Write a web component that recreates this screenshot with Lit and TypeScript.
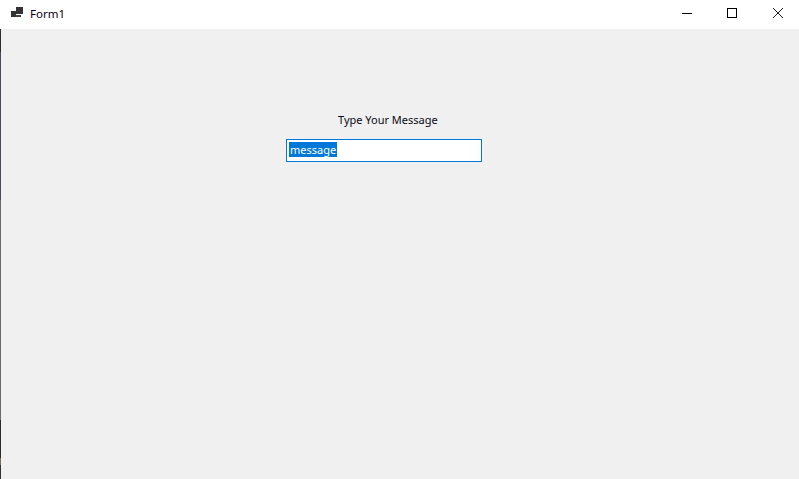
import { LitElement, html, css } from "lit";
import { customElement } from "lit/decorators.js";

@customElement("app-root")
export class AppRoot extends LitElement {
  static styles = css`
    :host {
      display: flex;
      width: 799px;
      height: 479px;
      overflow: hidden;
      font-family: "Noto Sans", "Open Sans", "Liberation Sans", sans-serif;
      font-size: 11px;
      color: #000;
      background: #fff;
    }
    .edge {
      width: 1px;
      flex: none;
      background: linear-gradient(
        to bottom,
        #ffffff 0 29px,
        #2b2b2b 29px 52px,
        #4a4a5a 52px 200px,
        #6a6a6a 200px 420px,
        #2a2a2a 420px 458px,
        #7a6a5a 458px 465px,
        #333333 465px 479px
      );
    }
    .window {
      flex: 1;
      display: flex;
      flex-direction: column;
      min-width: 0;
    }
    .titlebar {
      height: 29px;
      flex: none;
      display: flex;
      align-items: flex-start;
      background: #fff;
    }
    .app-icon {
      margin: 7px 0 0 10px;
      width: 12px;
      height: 10px;
      flex: none;
    }
    .title {
      margin-left: 7px;
      flex: 1;
      font-size: 11.5px;
      line-height: 28px;
      color: #0a0014;
    }
    .controls {
      display: flex;
      padding: 8px 15px 0 0;
    }
    .control {
      width: 11px;
      height: 11px;
      display: block;
    }
    .minimize {
      margin-right: 34px;
    }
    .maximize {
      margin-right: 35px;
    }
    .client {
      flex: 1;
      background: #f0f0f0;
      padding-top: 82px;
      padding-left: 285px;
      display: flex;
      flex-direction: column;
      align-items: flex-start;
    }
    .label {
      margin-left: 52px;
      height: 18px;
      line-height: 18px;
      color: #0a0a14;
      white-space: nowrap;
    }
    .textbox {
      margin-top: 10px;
      width: 196px;
      height: 23px;
      box-sizing: border-box;
      border: 1px solid #0078d7;
      background: #fff;
      padding: 2px;
      display: flex;
      align-items: flex-start;
    }
    .selected {
      background: #0078d7;
      color: #fff;
      padding: 0 1px;
      line-height: 15px;
      height: 15px;
      font-size: 11px;
    }
  `;

  render() {
    return html`
      <div class="edge"></div>
      <div class="window">
        <div class="titlebar">
          <svg class="app-icon" viewBox="0 0 12 10" aria-hidden="true">
            <rect x="0" y="4" width="5" height="6" fill="#333"></rect>
            <rect x="5" y="0" width="7" height="7" fill="#333"></rect>
            <rect x="5" y="8" width="5" height="2" fill="#444"></rect>
          </svg>
          <span class="title">Form1</span>
          <div class="controls">
            <svg class="control minimize" viewBox="0 0 11 11"><path d="M0 5.5H10" stroke="#000" fill="none"></path></svg>
            <svg class="control maximize" viewBox="0 0 11 11"><rect x=".5" y=".5" width="9" height="9" stroke="#000" fill="none"></rect></svg>
            <svg class="control" viewBox="0 0 11 11"><path d="M0 0L10 10M10 0L0 10" stroke="#000" stroke-width=".9" fill="none"></path></svg>
          </div>
        </div>
        <div class="client">
          <div class="label">Type Your Message</div>
          <div class="textbox"><span class="selected">message</span></div>
        </div>
      </div>
    `;
  }
}
